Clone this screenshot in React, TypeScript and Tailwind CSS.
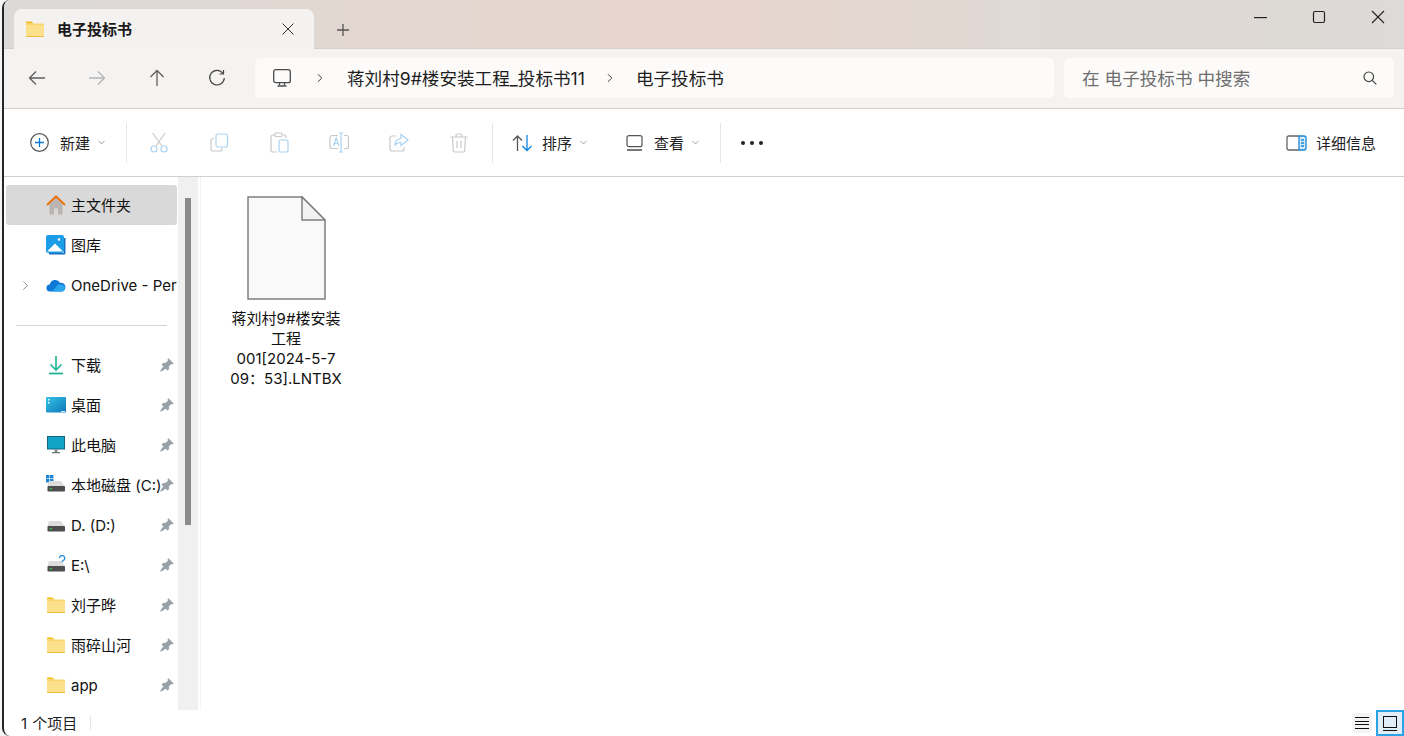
import { ChevronDown, ChevronRight } from "lucide-react";
import type { ReactNode } from "react";

const FONT = "font-['Inter','Noto_Sans_CJK_SC',sans-serif]";

function FolderIcon({ size = 20 }: { size?: number }) {
  return (
    <svg width={size} height={size} viewBox="0 0 20 20">
      <path d="M1 3.500C1 3 1.400 2.500 2 2.500h4.500l2 2H1z" fill="#f5b919" />
      <rect x="1" y="4.500" width="18" height="13.500" rx="1" fill="#fbd469" />
      <rect x="1" y="6" width="18" height="12" rx="1" fill="#fde08c" />
      <rect x="1" y="17" width="18" height="1" fill="#f2bc3c" />
    </svg>
  );
}

function HomeIcon() {
  return (
    <svg width="20" height="22" viewBox="0 0 20 22">
      <path d="M3.500 10 10 4l6.500 6v10.500h-4.500v-6H8v6H3.500z" fill="#b9b5b2" />
      <path d="M1 11 10 2.500 19 11" fill="none" stroke="#e8720c" strokeWidth="2" />
    </svg>
  );
}

function GalleryIcon() {
  return (
    <svg width="20" height="20" viewBox="0 0 20 20">
      <rect x="0" y="0" width="18" height="18" rx="2" fill="#1b9de8" />
      <path d="M19.500 3v15a1.500 1.500 0 0 1-1.500 1.500H3V18h15V3z" fill="#1a6fc0" />
      <path d="M1 16.500 9 8.500l8 8z" fill="#fff" />
      <circle cx="13" cy="4.500" r="1.300" fill="#fff" />
    </svg>
  );
}

function CloudIcon() {
  return (
    <svg width="20" height="14" viewBox="0 0 20 14">
      <path d="M4 13.500A3.500 3.500 0 0 1 3.800 6.500 5.500 5.500 0 0 1 14 4.800 4 4 0 0 1 16 13.500z" fill="#0f78d4" />
      <path d="M6 13.500 10 9a4 4 0 0 1 5.200-2.500 3.600 3.600 0 0 1 1.300 7z" fill="#2aa5ee" />
    </svg>
  );
}

function DownloadIcon() {
  return (
    <svg width="20" height="20" viewBox="0 0 20 20" fill="none" stroke="#1fb394" strokeWidth="1.600">
      <path d="M10 1v13M4.500 9.500 10 15l5.500-5.500" />
      <path d="M3 18.500h14" strokeWidth="1.800" />
    </svg>
  );
}

function DesktopIcon() {
  return (
    <svg width="20" height="16" viewBox="0 0 20 16">
      <defs>
        <linearGradient id="desk" x1="0" y1="0" x2="1" y2="1">
          <stop offset="0" stopColor="#33c3e6" />
          <stop offset="1" stopColor="#0f76b8" />
        </linearGradient>
      </defs>
      <rect width="20" height="15.500" rx="1" fill="url(#desk)" />
      <rect x="2" y="2" width="1.500" height="1.500" fill="#fff" />
      <rect x="2" y="5" width="1.500" height="1.500" fill="#fff" />
      <rect x="15" y="14" width="4" height="1" fill="#cfeaf5" />
    </svg>
  );
}

function PcIcon() {
  return (
    <svg width="18" height="18" viewBox="0 0 18 18">
      <rect x="0.500" y="0.500" width="17" height="12.500" fill="#12a3c9" stroke="#15647f" />
      <rect x="7.500" y="13.500" width="3" height="2.500" fill="#7d8a90" />
      <rect x="5" y="16" width="8" height="1.300" fill="#6d777c" />
    </svg>
  );
}

function DriveIcon({ win, unknown }: { win?: boolean; unknown?: boolean }) {
  return (
    <svg width="20" height="20" viewBox="0 0 20 20">
      {win && (
        <g fill="#1a86d8">
          <rect x="0" y="0" width="3.400" height="3.400" />
          <rect x="4" y="0" width="3.400" height="3.400" />
          <rect x="0" y="4" width="3.400" height="3.400" />
          <rect x="4" y="4" width="3.400" height="3.400" />
        </g>
      )}
      <path d="M3 6h12l3.500 5H1.500z" fill="#dcdcdc" />
      <rect x="1.500" y="11" width="17.500" height="5.500" rx="0.800" fill="#4b4d4f" />
      <rect x="4" y="13" width="1.500" height="1.500" fill="#35e04a" />
      {unknown && (
        <path d="M13.500 3.200a2.600 2.600 0 1 1 3.600 2.400c-.7.4-1 .8-1 1.700" fill="none" stroke="#2a8fdc" strokeWidth="1.300" />
      )}
    </svg>
  );
}

function PinIcon() {
  return (
    <svg width="14" height="14" viewBox="0 0 14 14" fill="#98a2a8">
      <path d="M8.500.300 13.700 5.500 12.500 6.500 11.300 6.100 8.900 8.600 9.100 11 7.500 12.500 1.500 6.500 3 4.900 5.400 5.100 7.900 2.700 7.500 1.500z" />
      <path d="M3.500 8 6 10.500 1 13.800.200 13z" />
    </svg>
  );
}

// one row of the navigation pane
function NavRow({
  icon,
  label,
  pin,
  expand,
  selected,
}: {
  icon: ReactNode;
  label: string;
  pin?: boolean;
  expand?: boolean;
  selected?: boolean;
}) {
  return (
    <div
      className={`relative flex h-10 ml-[2px] w-[171px] shrink-0 items-center rounded-[3px] ${selected ? "bg-[#d9d9d9]" : ""}`}
    >
      <div className="flex w-[40px] shrink-0 justify-center">
        {expand && <ChevronRight size={15} className="ml-[-2px] text-[#808080]" strokeWidth={1.500} />}
      </div>
      <div className="flex w-[20px] shrink-0 items-center justify-center">{icon}</div>
      <span className="ml-[5px] w-[106px] overflow-hidden whitespace-nowrap pt-[2px] text-[15px] leading-5 text-[#111]">
        {label}
      </span>
      {pin && (
        <span className="absolute right-[3px] top-[13px]">
          <PinIcon />
        </span>
      )}
    </div>
  );
}

function NavBtn({ children }: { children: ReactNode }) {
  return <div className="flex h-10 w-[60px] items-center justify-center">{children}</div>;
}

function Divider() {
  return <div className="ml-[3px] mr-[2px] h-10 w-px bg-[#e6e6e6]" />;
}

function Caret() {
  return <ChevronDown size={11} className="ml-[6px] text-[#777]" strokeWidth={1.500} />;
}

const G = "#c9c9c9";
const B = "#a9d3f2";

export default function App() {
  return (
    <div className={`h-screen w-full overflow-hidden bg-[#f5f5f5] pl-[2px] ${FONT}`}>
      <div className="flex h-full flex-col overflow-hidden rounded-l-lg border-l-2 border-[#262626] bg-white">
        {/* title bar */}
        <div className="flex h-[49px] shrink-0 border-b border-[#d8cfca] bg-[linear-gradient(90deg,#dcdad8_0%,#e2d7d1_25%,#e8d6ce_50%,#e0d9d4_72%,#dddad7_100%)]">
          <div className="ml-[10px] mt-[9px] flex h-[40px] w-[300px] items-center rounded-t-lg bg-[#f4f2f1] pl-[11px]">
            <FolderIcon size={20} />
            <span className="ml-[12px] pt-[2px] text-[15px] font-semibold text-[#1a1a1a]">电子投标书</span>
            <svg className="ml-auto mr-[20px]" width="12" height="12" viewBox="0 0 12 12" stroke="#333" strokeWidth="1">
              <path d="M.500.500l11 11M11.500.500l-11 11" />
            </svg>
          </div>
          <svg className="ml-[22px] mt-[23px]" width="14" height="14" viewBox="0 0 14 14" stroke="#555" strokeWidth="1.300">
            <path d="M7 1v12M1 7h12" />
          </svg>
          <div className="ml-auto flex items-start pt-[10px]">
            <svg className="mr-[44px] mt-[7px]" width="14" height="2" viewBox="0 0 14 2">
              <rect width="13" height="1.200" fill="#222" />
            </svg>
            <svg className="mr-[45px]" width="14" height="14" viewBox="0 0 14 14" fill="none" stroke="#222" strokeWidth="1.200">
              <rect x="1.500" y="1.500" width="11" height="11" rx="1.500" />
            </svg>
            <svg className="mr-[19px]" width="14" height="14" viewBox="0 0 14 14" stroke="#222" strokeWidth="1.100">
              <path d="M1 1l12 12M13 1 1 13" />
            </svg>
          </div>
        </div>

        {/* address row */}
        <div className="flex h-[60px] shrink-0 items-center border-b border-[#d6cec9] bg-[#f5f3f1] pb-px pl-[3px] pr-[10px]">
          <NavBtn>
            <svg width="18" height="16" viewBox="0 0 18 16" fill="none" stroke="#5f5f5f" strokeWidth="1.300">
              <path d="M17 8H2M8 1.500 1.500 8 8 14.500" />
            </svg>
          </NavBtn>
          <NavBtn>
            <svg width="18" height="16" viewBox="0 0 18 16" fill="none" stroke="#b4b4b4" strokeWidth="1.300">
              <path d="M1 8h15M10 1.500 16.500 8 10 14.500" />
            </svg>
          </NavBtn>
          <NavBtn>
            <svg width="16" height="18" viewBox="0 0 16 18" fill="none" stroke="#5f5f5f" strokeWidth="1.300">
              <path d="M8 17V2M1.500 8 8 1.500 14.500 8" />
            </svg>
          </NavBtn>
          <NavBtn>
            <svg width="18" height="18" viewBox="0 0 18 18" fill="none" stroke="#444" strokeWidth="1.200">
              <path d="M15 4.500A7.300 7.300 0 1 0 16.300 9" />
              <path d="M15.500 1v4h-4" />
            </svg>
          </NavBtn>
          <div className="ml-[8px] flex h-10 w-[799px] items-center rounded-[5px] bg-[#fcfbfa] text-[17.600px] text-[#1e1e1e]">
            <svg className="ml-[18px]" width="18" height="18" viewBox="0 0 18 18" fill="none" stroke="#4a4a4a" strokeWidth="1.300">
              <rect x="0.700" y="0.700" width="16.600" height="13" rx="2" />
              <path d="M6.500 14v2M11.500 14v2M4.500 17h9" />
            </svg>
            <ChevronRight size={14} className="ml-[22px] text-[#333]" strokeWidth={1.600} />
            <span className="ml-[20px] pt-[2px]">蒋刘村9#楼安装工程_投标书11</span>
            <ChevronRight size={14} className="ml-[18px] text-[#333]" strokeWidth={1.600} />
            <span className="ml-[19px] pt-[2px]">电子投标书</span>
          </div>
          <div className="ml-[10px] flex h-10 w-[330px] items-center rounded-[5px] bg-[#fcfbfa] pl-[18px] text-[17.600px] text-[#6e6e6e]">
            <span className="pt-[2px]">在 电子投标书 中搜索</span>
            <svg className="ml-auto mr-[17px]" width="14" height="14" viewBox="0 0 14 14" fill="none" stroke="#444" strokeWidth="1.200">
              <circle cx="5.800" cy="5.800" r="4.800" />
              <path d="M9.300 9.300 13.300 13.300" />
            </svg>
          </div>
        </div>

        {/* command bar */}
        <div className="flex h-[68px] shrink-0 items-center border-b border-[#d4cfca] pl-[26px] pr-[28px] text-[15px] text-[#1f1f1f]">
          <svg width="19" height="19" viewBox="0 0 19 19" fill="none">
            <circle cx="9.500" cy="9.500" r="8.800" stroke="#555" strokeWidth="1.200" />
            <path d="M9.500 5v9M5 9.500h9" stroke="#0a78d4" strokeWidth="1.300" />
          </svg>
          <span className="ml-[11px] pt-[3px]">新建</span>
          <Caret />
          <div className="ml-[16px]">
            <Divider />
          </div>
          <NavBtn>
            <svg width="18" height="21" viewBox="0 0 18 21" fill="none" strokeWidth="1.200">
              <path d="M2.500 1 12 14M15 1 6 14" stroke={G} />
              <circle cx="4" cy="17" r="3" stroke={B} />
              <circle cx="14" cy="17" r="3" stroke={B} />
            </svg>
          </NavBtn>
          <NavBtn>
            <svg width="19" height="19" viewBox="0 0 19 19" fill="none" strokeWidth="1.200">
              <path d="M4 5.500H3a2 2 0 0 0-2 2V16a2 2 0 0 0 2 2h7a2 2 0 0 0 2-2v-1" stroke={G} />
              <rect x="6" y="1" width="11.500" height="13" rx="2" stroke={B} />
            </svg>
          </NavBtn>
          <NavBtn>
            <svg width="19" height="21" viewBox="0 0 19 21" fill="none" strokeWidth="1.200">
              <path d="M5 3H3a2 2 0 0 0-2 2v13a2 2 0 0 0 2 2h4M13 3h1a2 2 0 0 1 2 2v1" stroke={G} />
              <rect x="5" y="1" width="7" height="3.500" rx="1" stroke={G} />
              <rect x="9" y="8" width="9" height="12" rx="1.500" stroke={B} />
            </svg>
          </NavBtn>
          <NavBtn>
            <svg width="21" height="21" viewBox="0 0 21 21" fill="none" strokeWidth="1.200">
              <path d="M9 3.500H3a2 2 0 0 0-2 2v9a2 2 0 0 0 2 2h6M15 3.500h2.500a2 2 0 0 1 2 2v9a2 2 0 0 1-2 2H15" stroke={G} />
              <path d="M12 1v19M10 1h4M10 20h4" stroke={B} />
              <path d="M4.500 14 7.200 6l2.700 8M5.500 11.500h3.500" stroke={B} />
            </svg>
          </NavBtn>
          <NavBtn>
            <svg width="20" height="19" viewBox="0 0 20 19" fill="none" strokeWidth="1.200">
              <path d="M7 3H3a2 2 0 0 0-2 2v11a2 2 0 0 0 2 2h10a2 2 0 0 0 2-2v-2" stroke={G} />
              <path d="M12 1.500 19 7l-7 5.500V9.500c-3 0-5 1-6 3 0-4 2-6.500 6-7z" stroke={B} />
            </svg>
          </NavBtn>
          <NavBtn>
            <svg width="18" height="20" viewBox="0 0 18 20" fill="none" stroke={G} strokeWidth="1.200">
              <path d="M.500 4h17M6 4V2.500A1.500 1.500 0 0 1 7.500 1h3A1.500 1.500 0 0 1 12 2.500V4M2.500 4l.8 13.500a1.500 1.500 0 0 0 1.500 1.500h8.400a1.500 1.500 0 0 0 1.500-1.500L15.500 4M7 8v7M11 8v7" />
            </svg>
          </NavBtn>
          <Divider />
          <svg className="ml-[17px]" width="21" height="18" viewBox="0 0 21 18" fill="none" strokeWidth="1.300">
            <path d="M5.500 17V2M1 6.500 5.500 2 10 6.500" stroke="#555" />
            <path d="M15 1v15.500M10.500 12l4.500 4.500 4.500-4.500" stroke="#0a84e0" />
          </svg>
          <span className="ml-[9px] pt-[3px]">排序</span>
          <Caret />
          <svg className="ml-[37px]" width="17" height="16" viewBox="0 0 17 16" fill="none" stroke="#555" strokeWidth="1.200">
            <rect x="1" y="0.700" width="15" height="11" rx="2" />
            <path d="M1 15h15" strokeWidth="1.600" />
          </svg>
          <span className="ml-[11px] pt-[3px]">查看</span>
          <Caret />
          <div className="ml-[16px]">
            <Divider />
          </div>
          <div className="ml-[18px] flex gap-[5px]">
            <span className="h-1 w-1 rounded-full bg-[#222]" />
            <span className="h-1 w-1 rounded-full bg-[#222]" />
            <span className="h-1 w-1 rounded-full bg-[#222]" />
          </div>
          <svg className="ml-auto" width="21" height="16" viewBox="0 0 21 16" fill="none" strokeWidth="1.300">
            <path d="M13 1H3a2 2 0 0 0-2 2v10a2 2 0 0 0 2 2h10" stroke="#666" />
            <path d="M13 1h5a2 2 0 0 1 2 2v10a2 2 0 0 1-2 2h-5z" stroke="#1a86d8" fill="#d6ebfa" />
            <path d="M15 5h3M15 8h3M15 11h3" stroke="#1a86d8" />
          </svg>
          <span className="ml-[9px] pt-[3px]">详细信息</span>
        </div>

        {/* body */}
        <div className="flex min-h-0 flex-1">
          <div className="flex w-[174px] shrink-0 flex-col overflow-hidden pt-2">
            <NavRow selected icon={<HomeIcon />} label="主文件夹" />
            <NavRow icon={<GalleryIcon />} label="图库" />
            <NavRow expand icon={<CloudIcon />} label="OneDrive - Per" />
            <div className="flex h-10 shrink-0 items-center pl-3">
              <div className="h-px w-[151px] bg-[#d4d4d4]" />
            </div>
            <NavRow pin icon={<DownloadIcon />} label="下载" />
            <NavRow pin icon={<DesktopIcon />} label="桌面" />
            <NavRow pin icon={<PcIcon />} label="此电脑" />
            <NavRow pin icon={<DriveIcon win />} label="本地磁盘 (C:)" />
            <NavRow pin icon={<DriveIcon />} label="D. (D:)" />
            <NavRow pin icon={<DriveIcon unknown />} label="E:\" />
            <NavRow pin icon={<FolderIcon />} label="刘子晔" />
            <NavRow pin icon={<FolderIcon />} label="雨碎山河" />
            <NavRow pin icon={<FolderIcon />} label="app" />
          </div>
          <div className="relative w-5 shrink-0 bg-[#f0f0f0]">
            <div className="absolute left-[7px] top-[21px] h-[327px] w-[6px] bg-[#8a8a8a]" />
          </div>
          <div className="ml-[2px] flex-1 border-l border-[#f3f3f3]">
            <div className="ml-[27px] mt-[19px] flex w-[116px] flex-col items-center">
              <svg width="79" height="104" viewBox="0 0 79 104">
                <path d="M1 1h54l23 23v79H1z" fill="#f9f9f9" stroke="#7f7f7f" strokeWidth="1.500" />
                <path d="M55 1v23h23z" fill="#f2f2f2" stroke="#7f7f7f" strokeWidth="1.500" />
              </svg>
              <div className="mt-[9px] whitespace-nowrap text-center text-[15px] leading-5 text-[#111]">
                蒋刘村9#楼安装
                <br />
                工程
                <br />
                001[2024-5-7
                <br />
                09：53].LNTBX
              </div>
            </div>
          </div>
        </div>

        {/* status bar */}
        <div className="flex h-[26px] shrink-0 items-center pl-[17px] text-[15px] text-[#1f1f1f]">
          <span className="pt-[3px] [word-spacing:1px]">1 个项目</span>
          <div className="ml-[13px] h-[14px] w-px bg-[#e4e4e4]" />
          <div className="ml-auto flex items-center">
            <div className="flex h-[20px] w-[20px] flex-col justify-between bg-[#f4f4f4] px-[3px] py-[4px]">
              <div className="h-px bg-[#111]" />
              <div className="h-px bg-[#111]" />
              <div className="h-px bg-[#111]" />
              <div className="h-px bg-[#111]" />
            </div>
            <div className="ml-[4px] flex h-[26px] w-[28px] flex-col items-center justify-center border-2 border-[#29a3e6] bg-[#e1eef7]">
              <div className="h-[12px] w-[14px] border border-[#111]" />
              <div className="mt-[2px] h-px w-[14px] bg-[#111]" />
            </div>
          </div>
        </div>
      </div>
    </div>
  );
}
